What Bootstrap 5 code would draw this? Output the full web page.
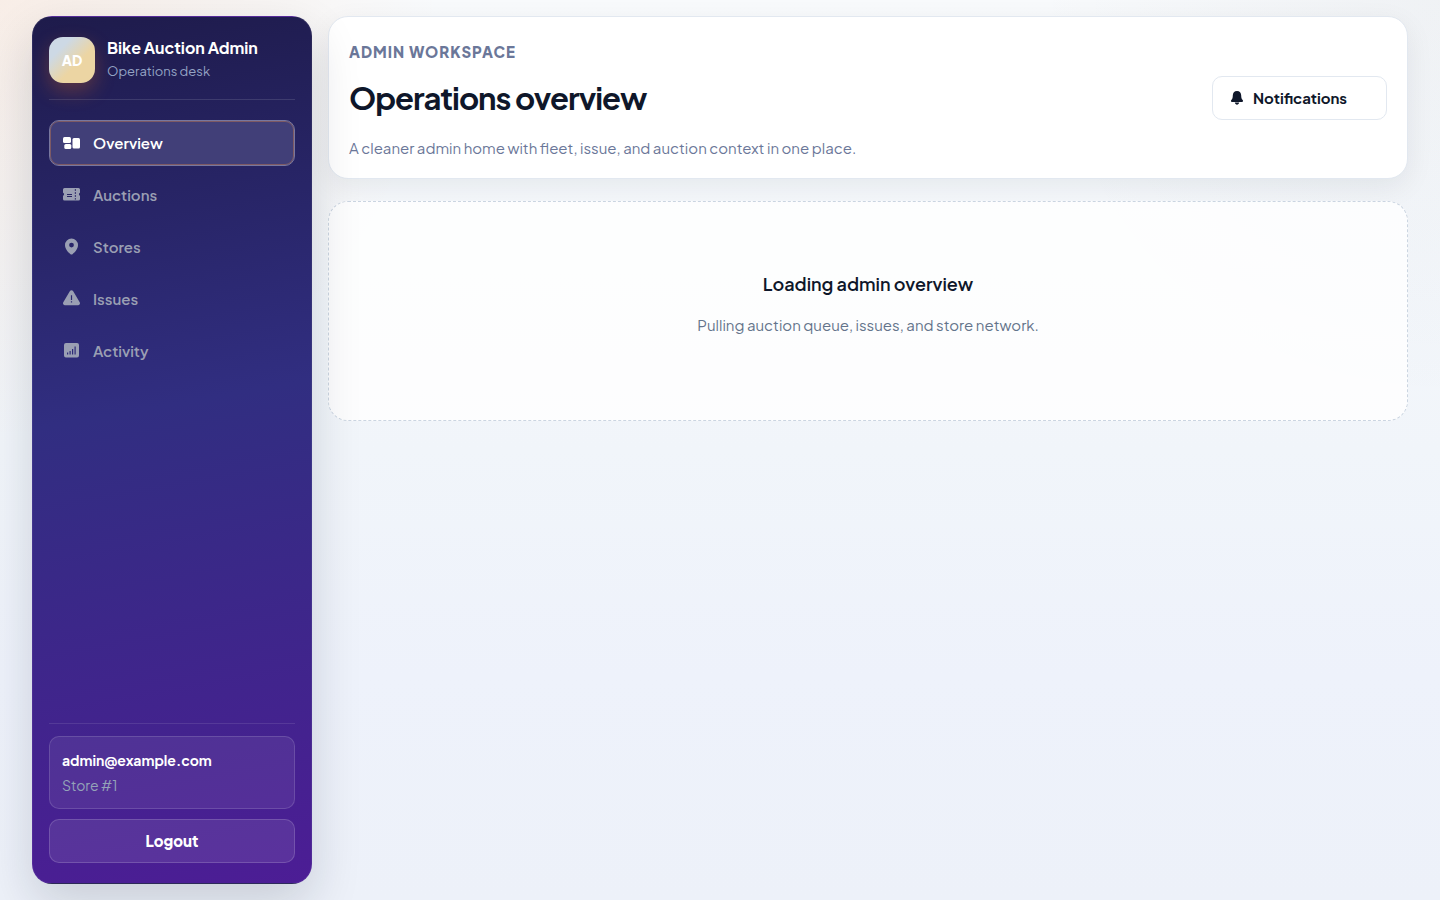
<!DOCTYPE html>
<html lang="en">
<head>
<meta charset="utf-8">
<meta name="viewport" content="width=device-width, initial-scale=1">
<title>Bike Auction Admin</title>
<link href="https://cdn.jsdelivr.net/npm/bootstrap@5.3.0/dist/css/bootstrap.min.css" rel="stylesheet">
<style>
  body {
    font-family: "Plus Jakarta Sans", Inter, "Liberation Sans", sans-serif;
    font-size: 15px;
    line-height: 24px;
    color: #0f172a;
    min-height: 100vh;
    background:
      radial-gradient(circle at 0 0, rgba(249, 115, 22, .09), transparent 26%),
      radial-gradient(circle at 100% 0, rgba(30, 41, 59, .04), transparent 24%),
      linear-gradient(180deg, #f8fafc 0%, #f1f5fa 50%, #eef2fb 75%, #edf1f9 100%);
  }
  .shell { padding: 16px 32px; gap: 16px; }
  .side-panel {
    padding: 20px 16px;
    border: 1px solid rgba(255, 255, 255, .06);
    border-radius: 20px;
    background: linear-gradient(170deg, #1e1b4b 0%, #312e81 45%, #4c1d95 100%);
    box-shadow: 0 20px 50px rgba(15, 23, 42, .16);
  }
  .brand { gap: 12px; padding-bottom: 16px; border-bottom: 1px solid rgba(255, 255, 255, .12); }
  .brand-mark {
    width: 46px; height: 46px; border-radius: 14px;
    font-size: 14px; font-weight: 800; color: #fff;
    background: linear-gradient(135deg, #cdd9e5 25%, #ecd5a3 60%);
    box-shadow: 0 8px 20px rgba(249, 115, 22, .28);
  }
  .brand-name { font-size: 16px; line-height: 22px; font-weight: 700; color: #fff; }
  .brand-sub { font-size: 13px; line-height: 24px; color: #94a3c4; }
  .side-nav { gap: 6px; padding-top: 20px; }
  .side-nav .nav-link {
    gap: 12px; height: 46px; padding: 0 13px;
    border: 1px solid transparent; border-radius: 10px;
    font-size: 15px; font-weight: 600; color: #9a9fb3;
  }
  .side-nav .nav-link:hover { color: #fff; }
  .side-nav .nav-link.active {
    color: #fff; background: #413f78; border-color: #77779f;
    box-shadow: inset 0 0 0 1px rgba(251, 146, 60, .32);
  }
  .side-foot { gap: 10px; padding-top: 12px; border-top: 1px solid rgba(255, 255, 255, .1); }
  .user-box {
    padding: 11px 12px; border: 1px solid rgba(255, 255, 255, .14); border-radius: 10px;
    background: rgba(255, 255, 255, .07);
  }
  .user-mail { font-size: 14px; font-weight: 700; color: #fff; margin-bottom: 1px; }
  .user-store { font-size: 14px; color: #94a3b8; }
  .btn-logout, .btn-logout:hover {
    height: 44px; font-size: 15px; font-weight: 800; color: #fff; border-radius: 10px;
    border: 1px solid rgba(255, 255, 255, .16); background: rgba(255, 255, 255, .09);
  }
  .content { gap: 22px; }
  .head-card {
    padding: 20px; background: #fff; border: 1px solid #e2e8f0; border-radius: 20px;
    box-shadow: 0 8px 28px rgba(15, 23, 42, .07);
  }
  .eyebrow { font-size: 15px; font-weight: 800; letter-spacing: 1px; color: #6b7799; line-height: 30px; }
  .page-title { font-size: 31px; font-weight: 700; letter-spacing: -1px; line-height: 38px; }
  .title-row { padding: 9px 0 17px; }
  .intro { font-size: 15px; line-height: 21px; color: #6b7799; }
  .btn-notify, .btn-notify:hover {
    gap: 8px; width: 175px; height: 44px; padding: 0 17px; background: #fff;
    border: 1px solid #e2e8f0; border-radius: 10px; color: #0f172a;
    font-size: 15px; font-weight: 700;
  }
  .loading-card {
    height: 220px; padding-bottom: 14px; border: 1px dashed #cbd5e1; border-radius: 20px;
    background: rgba(255, 255, 255, .8);
  }
  .loading-title { font-size: 18px; font-weight: 600; line-height: 26px; margin-bottom: 16px; }
  .loading-text { font-size: 15px; color: #64748b; }
  @media (min-width: 992px) {
    .side-panel { width: 280px; height: calc(100vh - 32px); top: 16px; }
  }
  @media (max-width: 991px) { .shell { padding: 16px; } }
</style>
</head>
<body>
<div class="shell d-flex flex-column flex-lg-row align-items-stretch align-items-lg-start">
  <aside class="side-panel d-flex flex-column flex-shrink-0 sticky-lg-top">
    <div class="brand d-flex align-items-center">
      <div class="brand-mark d-flex align-items-center justify-content-center flex-shrink-0">AD</div>
      <div>
        <div class="brand-name">Bike Auction Admin</div>
        <div class="brand-sub">Operations desk</div>
      </div>
    </div>
    <nav class="side-nav nav flex-column" aria-label="Admin">
      <a class="nav-link active d-flex align-items-center" href="#" aria-current="page">
        <svg width="18" height="18" viewBox="0 0 18 18" fill="currentColor" aria-hidden="true"><rect x="0" y="3" width="8" height="6" rx="1.5"/><rect x="1.3" y="10" width="7" height="5" rx="1.5"/><rect x="9.5" y="4" width="7.500" height="10.5" rx="1.5"/></svg>
        Overview</a>
      <a class="nav-link d-flex align-items-center" href="#">
        <svg width="18" height="18" viewBox="0 0 18 18" fill="currentColor" fill-rule="evenodd" aria-hidden="true"><path d="M1.5 2h14A1.5 1.5 0 0 1 17 3.500V6.800a1.600 1.600 0 0 0 0 3V13a1.500 1.500 0 0 1-1.500 1.500h-14A1.500 1.500 0 0 1 0 13v-3.200a1.600 1.600 0 0 0 0-3V3.500A1.500 1.500 0 0 1 1.500 2zM4 8v1h5V8zM6 10h3v1H4v-1zM11.800 3.300v1.500H13V3.300zm0 3v1.500H13V6.300zm0 3v1.500H13V9.300zm0 3v1.200H13v-1.200z"/></svg>
        Auctions</a>
      <a class="nav-link d-flex align-items-center" href="#">
        <svg width="18" height="18" viewBox="0 0 18 18" fill="currentColor" fill-rule="evenodd" aria-hidden="true"><path d="M8.500.5A6.500 6.500 0 0 0 2 7c0 4 3 7 5.500 9.200q1 .8 2 0C12 14 15 11 15 7A6.500 6.500 0 0 0 8.500.5zm0 4.200a2.400 2.400 0 1 1 0 4.800 2.400 2.400 0 0 1 0-4.800z"/></svg>
        Stores</a>
      <a class="nav-link d-flex align-items-center" href="#">
        <svg width="18" height="18" viewBox="0 0 18 18" fill="currentColor" fill-rule="evenodd" aria-hidden="true"><path d="M6.800 1.300a2 2 0 0 1 3.400 0l6.500 10.900a2 2 0 0 1-1.700 3H2a2 2 0 0 1-1.700-3zM7.900 5.300v4.800h1.200V5.300zm0 6v1.300h1.200v-1.300z"/></svg>
        Issues</a>
      <a class="nav-link d-flex align-items-center" href="#">
        <svg width="18" height="18" viewBox="0 0 18 18" fill="currentColor" fill-rule="evenodd" aria-hidden="true"><path d="M3 1h11a2 2 0 0 1 2 2v10.500a2 2 0 0 1-2 2H3a2 2 0 0 1-2-2V3a2 2 0 0 1 2-2zM4 10.500v2h1.200v-2zM6.500 9v3.500h1.200V9zM9 7v5.500h1.200V7zm2.500-2.500v8h1.200v-8z"/></svg>
        Activity</a>
    </nav>
    <div class="side-foot d-flex flex-column mt-auto">
      <div class="user-box">
        <div class="user-mail">admin@example.com</div>
        <div class="user-store">Store #1</div>
      </div>
      <button type="button" class="btn btn-logout w-100">Logout</button>
    </div>
  </aside>

  <main class="content d-flex flex-column flex-grow-1">
    <header class="head-card">
      <div class="eyebrow">ADMIN WORKSPACE</div>
      <div class="title-row d-flex flex-wrap align-items-center justify-content-between">
        <h1 class="page-title mb-0">Operations overview</h1>
        <button type="button" class="btn btn-notify d-flex align-items-center">
          <svg width="15" height="16" viewBox="0 0 15 16" fill="currentColor" aria-hidden="true"><path d="M7 1C4.300 1 2.800 3 2.800 5.500c0 2.500-.4 3.300-1.500 4.600-.7.900-.4 2 .7 2h10c1.100 0 1.400-1.100.7-2-1.100-1.300-1.500-2.100-1.500-4.600C11.200 3 9.700 1 7 1z"/><path d="M4.800 12.600h4.400c-.3 1.300-1.200 2.100-2.200 2.100s-1.900-.8-2.200-2.100z"/></svg>
          Notifications</button>
      </div>
      <p class="intro mb-0">A cleaner admin home with fleet, issue, and auction context in one place.</p>
    </header>
    <section class="loading-card d-flex flex-column align-items-center justify-content-center text-center" role="status">
      <h2 class="loading-title">Loading admin overview</h2>
      <p class="loading-text mb-0">Pulling auction queue, issues, and store network.</p>
    </section>
  </main>
</div>
<script src="https://cdn.jsdelivr.net/npm/bootstrap@5.3.0/dist/js/bootstrap.bundle.min.js"></script>
</body>
</html>
